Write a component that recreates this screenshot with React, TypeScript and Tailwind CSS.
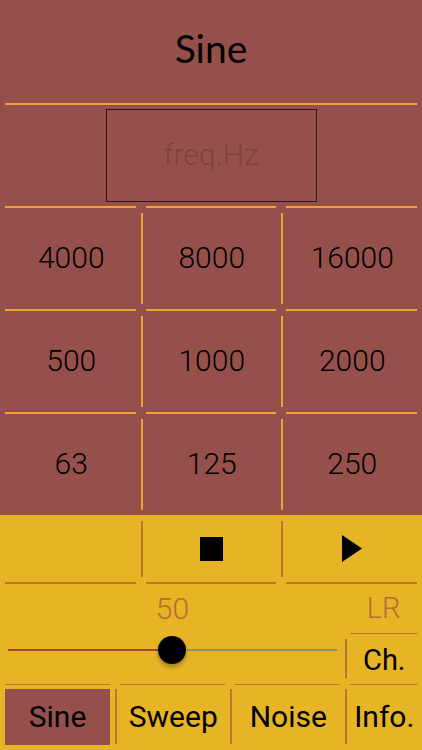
import React from "react";

const BROWN = "bg-[#96504b]";

function HLine({ dark }: { dark?: boolean }) {
  return <div className={`h-[1.5px] mx-[5px] ${dark ? "bg-[#b9772f]" : "bg-[#f0a232]"}`} />;
}

function VLine({ dark, className = "" }: { dark?: boolean; className?: string }) {
  return <div className={`w-[1.5px] shrink-0 ${dark ? "bg-[#b9772f]" : "bg-[#f0a232]"} ${className}`} />;
}

const rows = [
  ["4000", "8000", "16000"],
  ["500", "1000", "2000"],
  ["63", "125", "250"],
];

export default function App() {
  const numFont = { fontFamily: "Roboto, 'Liberation Sans', sans-serif" };
  return (
    <div className="w-[422px] h-[750px] overflow-hidden flex flex-col text-black" style={numFont}>
      <div className={`${BROWN} flex flex-col`}>
        <div className="h-[103px] flex items-center justify-center pb-[7px]">
          <span className="text-[39px] leading-none" style={{ fontFamily: "Lato, 'Noto Sans', sans-serif" }}>
            Sine
          </span>
        </div>
        <HLine />
        <div className="h-[101.5px] flex items-center justify-center">
          <div className="w-[211px] h-[93px] border border-[#3b1212] flex items-center justify-center">
            <span className="text-[30px] font-light text-[#7c4242] leading-none">freq.Hz</span>
          </div>
        </div>
        {rows.map((r, ri) => (
          <div key={ri} className="grid grid-cols-[141px_140px_141px] h-[103px]">
            {r.map((v, ci) => (
              <div key={ci} className="flex flex-col">
                <HLine />
                <div className="flex-1 flex flex-row">
                  {ci > 0 ? <VLine className="mt-[5px] mb-[5px]" /> : <div className="w-[1.5px]" />}
                  <div className="flex-1 flex items-center justify-center">
                    <span className="text-[30px] font-light leading-none">{v}</span>
                  </div>
                </div>
              </div>
            ))}
          </div>
        ))}
      </div>
      <div className="bg-[#e6b424] flex-1 flex flex-col">
        <div className="grid grid-cols-[141px_140px_141px] h-[67px]">
          <div />
          <div className="flex flex-row">
            <VLine dark className="mt-[6px] mb-[5px]" />
            <div className="flex-1 flex items-center justify-center">
              <div className="w-[23px] h-[24px] bg-black" />
            </div>
          </div>
          <div className="flex flex-row">
            <VLine dark className="mt-[6px] mb-[5px]" />
            <div className="flex-1 flex items-center justify-center">
              <svg width="20" height="27" viewBox="0 0 20 27">
                <polygon points="0,0 20,13.5 0,27" fill="#000" />
              </svg>
            </div>
          </div>
        </div>
        <div className="grid grid-cols-[141px_140px_141px]">
          <HLine dark />
          <HLine dark />
          <HLine dark />
        </div>
        <div className="h-[100px] flex flex-row">
          <div className="w-[345px] flex flex-col">
            <div className="h-[50px] flex items-center justify-center">
              <span className="text-[30px] font-light leading-none text-[#b56c36]">50</span>
            </div>
            <div className="h-[28px] mt-[2px] flex flex-row items-center pl-[8px]">
              <div className="w-[150px] h-[2px] bg-[#a4462e]" />
              <div className="w-[28px] h-[28px] rounded-full bg-black shadow-[0_3px_4px_rgba(0,0,0,0.3)] shrink-0" />
              <div className="w-[151px] h-[2px] bg-[#8f8c7c]" />
            </div>
          </div>
          <div className="flex-1 flex flex-col">
            <div className="h-[49px] flex items-center justify-center">
              <span className="text-[29px] font-light leading-none text-[#b56c36]">LR</span>
            </div>
            <HLine dark />
            <div className="flex-1 flex flex-row">
              <VLine dark className="mt-[5px] mb-[6px]" />
              <div className="flex-1 flex items-center justify-center pt-[4px]">
                <span className="text-[29px] leading-none">Ch.</span>
              </div>
            </div>
          </div>
        </div>
        <div className="grid grid-cols-[115px_115px_115px_77px]">
          <HLine dark />
          <HLine dark />
          <HLine dark />
          <HLine dark />
        </div>
        <div className="grid grid-cols-[115px_115px_115px_77px] flex-1">
          {["Sine", "Sweep", "Noise", "Info."].map((t, i) => (
            <div key={t} className="flex flex-row">
              {i > 0 ? <VLine dark className="mt-[4px] mb-[6px]" /> : null}
              <div className="flex-1 flex flex-col">
                <div
                  className={`mt-[4px] h-[56px] flex items-center justify-center ${
                    i === 0 ? "mx-[5px] bg-[#96504b]" : ""
                  }`}
                >
                  <span className="text-[30px] leading-none">{t}</span>
                </div>
              </div>
            </div>
          ))}
        </div>
      </div>
    </div>
  );
}
